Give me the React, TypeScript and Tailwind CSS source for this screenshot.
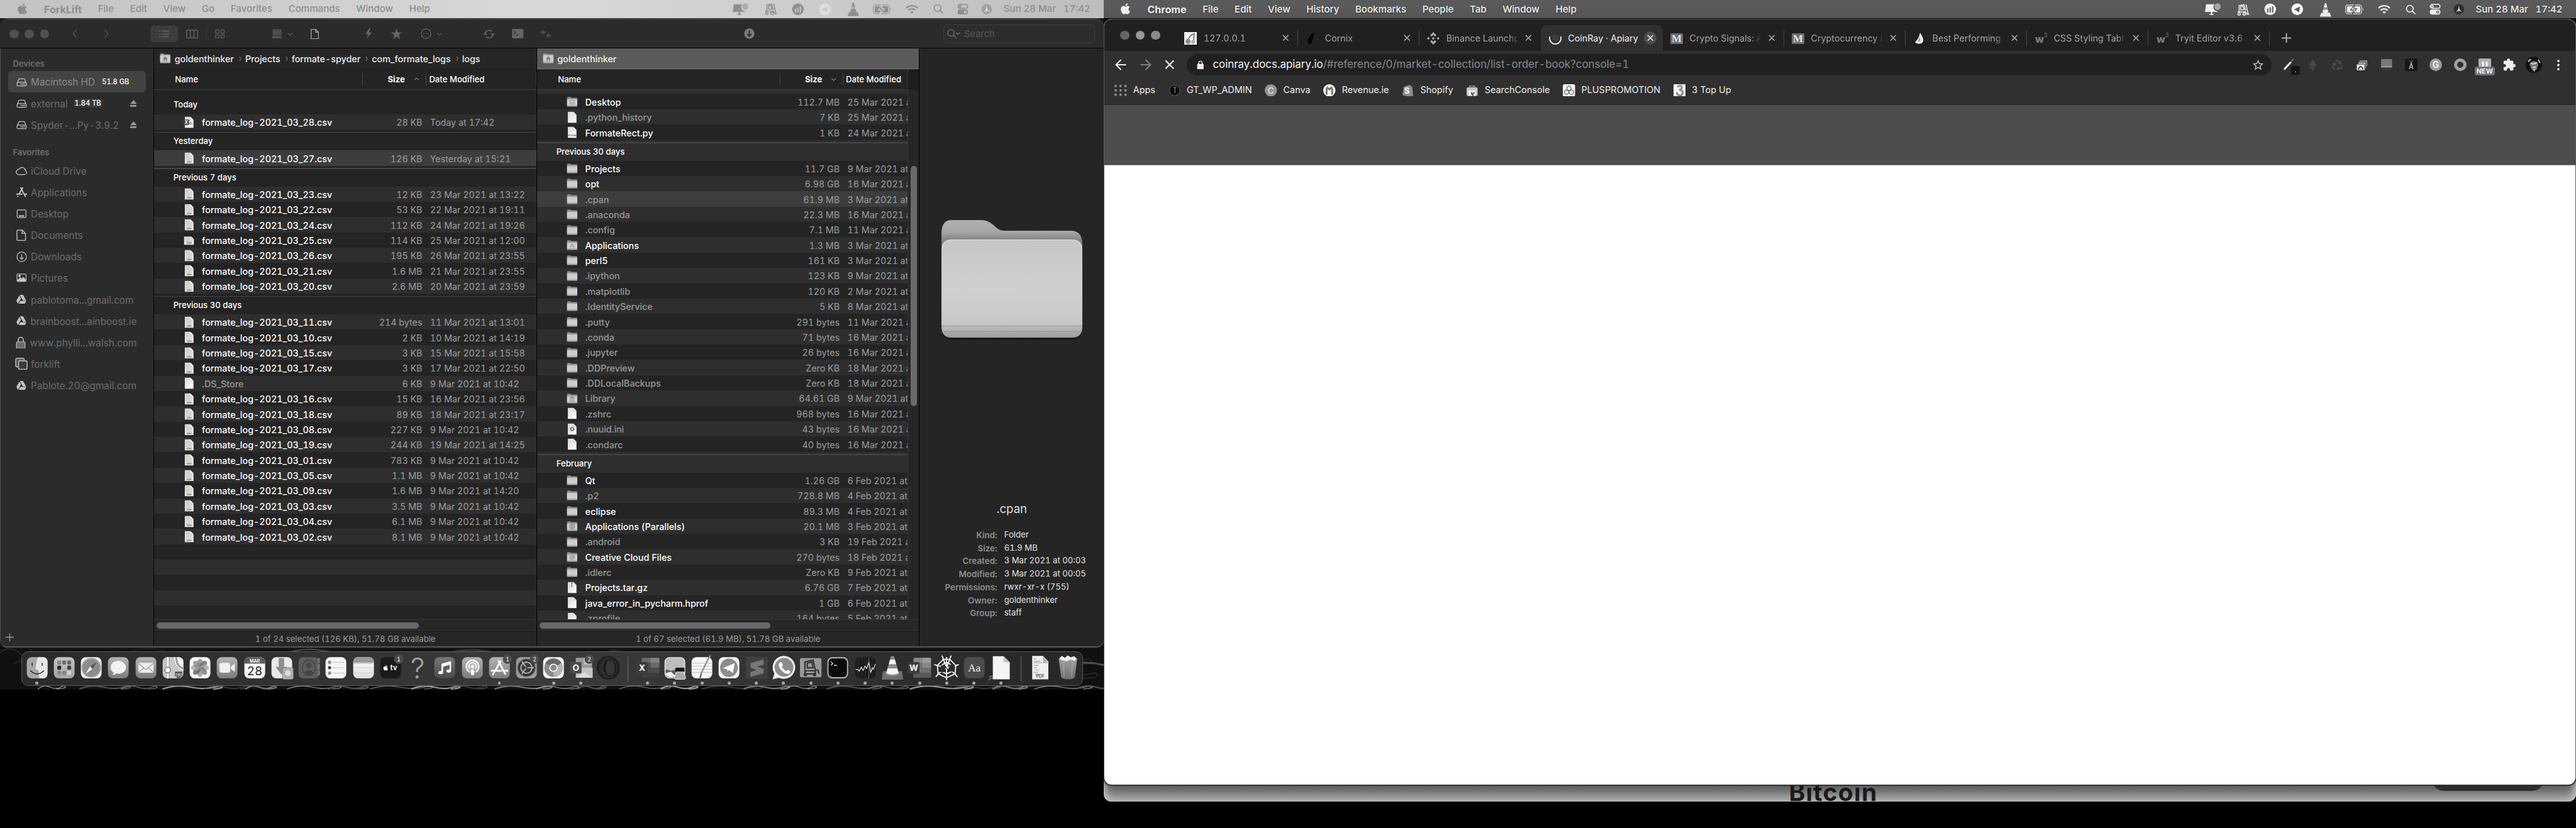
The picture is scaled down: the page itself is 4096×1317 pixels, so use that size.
import type { ReactNode } from "react";
import { FaApple, FaGoogleDrive, FaPodcast, FaMusic, FaWhatsapp, FaRecycle, FaEthereum } from "react-icons/fa";
import { MdExtension, MdStarOutline } from "react-icons/md";

type Kind = "csv" | "xls" | "csvwide" | "doc" | "py" | "ini" | "zip" | "folder" | "folderApp" | "folderLib" | "folderDesk" | "folderPar" | "folderCC";
type File = { n: string; s: string; d: string; k?: Kind; dim?: boolean; sel?: boolean };

/* ---------- shared gradients ---------- */
function Defs() {
  return (
    <svg className="absolute h-0 w-0" aria-hidden="true">
      <defs>
        <linearGradient id="folderFront" x1="0" y1="0" x2="0" y2="1">
          <stop offset="0" stopColor="#c6c6c6" />
          <stop offset="0.5" stopColor="#d0d0d0" />
          <stop offset="0.84" stopColor="#c8c8c8" />
          <stop offset="1" stopColor="#9c9c9c" />
        </linearGradient>
        <linearGradient id="folderBack" x1="0" y1="0" x2="0" y2="1">
          <stop offset="0" stopColor="#b0b0b0" />
          <stop offset="0.16" stopColor="#a6a6a6" />
          <stop offset="0.26" stopColor="#868686" />
          <stop offset="1" stopColor="#868686" />
        </linearGradient>
        <linearGradient id="paper" x1="0" y1="0" x2="1" y2="1">
          <stop offset="0" stopColor="#d8d8d8" />
          <stop offset="1" stopColor="#ffffff" />
        </linearGradient>
        <linearGradient id="mid" x1="0" y1="0" x2="0" y2="1">
          <stop offset="0" stopColor="#b4b4b4" />
          <stop offset="1" stopColor="#7c7c7c" />
        </linearGradient>
        <linearGradient id="light" x1="0" y1="0" x2="0" y2="1">
          <stop offset="0" stopColor="#c4c4c4" />
          <stop offset="1" stopColor="#a4a4a4" />
        </linearGradient>
        <linearGradient id="dark" x1="0" y1="0" x2="0" y2="1">
          <stop offset="0" stopColor="#787878" />
          <stop offset="1" stopColor="#4a4a4a" />
        </linearGradient>
        <linearGradient id="white" x1="0" y1="0" x2="0" y2="1">
          <stop offset="0" stopColor="#ffffff" />
          <stop offset="1" stopColor="#dcdcdc" />
        </linearGradient>
      </defs>
    </svg>
  );
}

/* ---------- small glyphs ---------- */
function Chevron({ dir, className }: { dir: "up" | "down" | "left" | "right"; className: string }) {
  const d = { up: "M1 7 5 2 9 7", down: "M1 3 5 8 9 3", left: "M7 0 3 5 7 10", right: "M3 0 7 5 3 10" }[dir];
  return (
    <svg viewBox="0 0 10 10" className={className} fill="none" stroke="currentColor" strokeWidth="1.3" preserveAspectRatio="none">
      <path d={d} />
    </svg>
  );
}

function Cross({ className }: { className: string }) {
  return (
    <svg viewBox="0 0 12 12" className={className} stroke="currentColor" strokeWidth="1.7" fill="none">
      <path d="M1 1 11 11M11 1 1 11" />
    </svg>
  );
}

function FolderIcon({ kind }: { kind: Kind }) {
  return (
    <svg viewBox="0 0 28 28" className="h-[17.5px] w-[17.5px] shrink-0">
      <path d="M1 4Q1 2 3 2H9Q10.500 2 11 4H25Q27 4 27 6V22H1Z" fill="#8e8e8e" />
      <rect x="1" y="7.500" width="26" height="19" rx="1.500" fill="url(#folderFront)" />
      <path d="M1 23.500H27" stroke="#888" strokeWidth="0.8" />
      {kind === "folderApp" && <path d="M9 20 14.500 10M19 20 13.500 10M8 17.500H20" stroke="#8c8c8c" strokeWidth="1.3" fill="none" />}
      {kind === "folderLib" && <path d="M8 12 14 9 20 12ZM9 13V20M12.500 13V20M15.500 13V20M19 13V20M8 21H20" stroke="#8c8c8c" strokeWidth="1.4" fill="#8c8c8c" />}
      {kind === "folderDesk" && <path d="M9 11H19V20H9ZM10 17H18" stroke="#8c8c8c" strokeWidth="1.300" fill="none" />}
      {kind === "folderPar" && <path d="M8 11H20V19H8ZM12 7V23M16 7V23" stroke="#777" strokeWidth="1.500" fill="none" />}
      {kind === "folderCC" && <g stroke="#888" strokeWidth="1.300" fill="none"><circle cx="14" cy="15" r="6" /><circle cx="12.500" cy="16" r="2.500" /><circle cx="16" cy="14.500" r="2.500" /></g>}
    </svg>
  );
}

function HomeFolder() {
  return (
    <svg viewBox="0 0 28 28" className="h-[17.500px] w-[17.5px] shrink-0">
      <path d="M1 4Q1 2 3 2H9Q10.500 2 11 4H25Q27 4 27 6V22H1Z" fill="#a4a4a4" />
      <rect x="1" y="6.500" width="26" height="20" rx="1.500" fill="url(#folderFront)" />
      <path d="M1 23.500H27" stroke="#888" strokeWidth="0.8" />
      <path d="M14 9 7.500 15H9.500V21H12.500V17H15.500V21H18.500V15H20.500Z" fill="#808080" />
    </svg>
  );
}

function DocIcon({ kind }: { kind: Kind }) {
  const wide = kind === "csvwide";
  return (
    <svg viewBox="0 0 28 30" className="h-[18.8px] w-[17.5px] shrink-0">
      <path d={wide ? "M1 5H19L26 12V26H1Z" : "M3 1H17L25 9V29H3Z"} fill="url(#paper)" />
      <path d={wide ? "M19 5V12H26Z" : "M17 1V9H25Z"} fill="#fff" stroke="#a8a8a8" strokeWidth="0.8" />
      {(kind === "csv" || kind === "csvwide") && (
        <>
          <path d={wide ? "M4 9H17M4 12H17M4 15H23M4 18H23" : "M6 5H15M6 8H15M6 11H22M6 14H22M6 17H22M6 20H22"} stroke="#b4b4b4" strokeWidth="1.200" />
          <text x="14" y={wide ? 24.5 : 27} fontSize="6" fontWeight="700" textAnchor="middle" fill="#444" fontFamily="Inter, sans-serif">CSV</text>
        </>
      )}
      {kind === "xls" && (
        <>
          <rect x="0" y="8" width="14" height="14" rx="1" fill="#484848" />
          <text x="7" y="19" fontSize="11" fontWeight="700" textAnchor="middle" fill="#fff" fontFamily="Inter, sans-serif">X</text>
          <text x="19" y="20" fontSize="11" fontWeight="600" textAnchor="middle" fill="#888" fontFamily="Inter, sans-serif">a,</text>
        </>
      )}
      {kind === "py" && <text x="14" y="26" fontSize="5" fontWeight="600" textAnchor="middle" fill="#555" fontFamily="Inter, sans-serif">PYTHON</text>}
      {kind === "ini" && <circle cx="14" cy="15" r="4" fill="none" stroke="#222" strokeWidth="3" strokeDasharray="1.800 1.200" />}
      {kind === "zip" && <path d="M13 1V14" stroke="#666" strokeWidth="3.500" strokeDasharray="1.500 0.500" />}
    </svg>
  );
}

function FileIcon({ kind = "csv" }: { kind?: Kind }) {
  return kind.startsWith("folder") ? <FolderIcon kind={kind} /> : <DocIcon kind={kind} />;
}

/* ---------- menu bars ---------- */
function StatusItems({ hollow }: { hollow: string }) {
  return (
    <div className="flex h-full items-center">
      <svg viewBox="0 0 28 22" className="h-[20px] w-[27.500px]">
        <path d="M2 2H17A7 7 0 0 0 21 14L23 15.500H0Z" fill="currentColor" />
        <path d="M10 16H13V19H15V20.500H8V19H10Z" fill="currentColor" />
        <ellipse cx="22" cy="6" rx="5.500" ry="5.800" fill="currentColor" opacity="0.5" />
      </svg>
      <svg viewBox="0 0 22 20" className="ml-[24px] h-[19px] w-[22px]" fill="none" stroke="currentColor" strokeWidth="1.600">
        <path d="M4 13V3L12 1.500 15 11M1.500 13.500H15L17 17.500H21M15.500 1 19 17M6.500 4.500 10.500 4 12.500 10H6.500Z" />
        <circle cx="4" cy="17" r="2" /><circle cx="12.500" cy="17" r="2" />
      </svg>
      <svg viewBox="0 0 20 20" className="ml-[21.500px] h-[19.500px] w-[19.500px]">
        <circle cx="10" cy="10" r="9.500" fill="currentColor" />
        <path d="M6 9V15M10 7V15M14 5V15" stroke={hollow} strokeWidth="2" />
      </svg>
      <svg viewBox="0 0 20 20" className="ml-[24px] h-[19.500px] w-[19.500px]">
        <circle cx="10" cy="10" r="9.500" fill={hollow === "#5a5a5a" ? "#ffffff" : "#dedede"} />
        <path d="M4.500 10.500 14.500 5.500 13 15.500 9.500 12.500Z" fill={hollow} />
      </svg>
      <svg viewBox="0 0 20 24" className="ml-[25.500px] h-[23px] w-[19.500px]">
        <path d="M9 1H11L13 8H7ZM6 12H14L15 16Q10 18 5 16ZM3 17H17L19.500 23.500H.5Z" fill="currentColor" />
        <path d="M7 8H13L14 12H6Z" fill="currentColor" opacity="0.4" />
      </svg>
      <svg viewBox="0 0 30 16" className="ml-[21px] h-[16px] w-[30px]">
        <rect x="0.700" y="1" width="25.500" height="14" rx="3.500" fill="none" stroke="currentColor" strokeWidth="1.300" opacity="0.8" />
        <rect x="2.800" y="3" width="21.300" height="10" rx="1.800" fill="currentColor" />
        <path d="M15 0.500 8.500 9H13L11.500 15.500 18.500 7H14Z" fill="currentColor" stroke={hollow} strokeWidth="1.300" />
        <path d="M28 5.500V10.500Q29.500 8 28 5.500Z" fill="currentColor" />
      </svg>
      <svg viewBox="0 0 20 16" className="ml-[22.500px] h-[16px] w-[20px]" fill="none" stroke="currentColor" strokeWidth="2.400">
        <path d="M1 6A12.500 12.500 0 0 1 19 6M4.300 9.500A8 8 0 0 1 15.700 9.500" />
        <path d="M10 15 7.200 12Q10 10 12.800 12Z" fill="currentColor" stroke="none" />
      </svg>
      <svg viewBox="0 0 17 17" className="ml-[23.500px] h-[16.500px] w-[16.500px]" fill="none" stroke="currentColor" strokeWidth="1.700">
        <circle cx="7" cy="7" r="5.500" /><path d="M11 11 16 16" />
      </svg>
      <svg viewBox="0 0 18 18" className="ml-[21.500px] h-[17.500px] w-[18px]" fill="none" stroke="currentColor" strokeWidth="1.400">
        <rect x="1" y="1" width="16" height="6.500" rx="3.200" /><circle cx="4.300" cy="4.300" r="1.600" />
        <rect x="1" y="10" width="16" height="7" rx="3.500" fill="currentColor" /><circle cx="13.300" cy="13.500" r="1.800" stroke={hollow} />
      </svg>
      <svg viewBox="0 0 18 18" className="ml-[20px] h-[17.500px] w-[17.500px]">
        <circle cx="9" cy="9" r="8.500" fill={hollow === "#5a5a5a" ? "#2e2e2e" : "#a0a0a0"} />
        <path d="M9 3 10 9 14 14 9.500 11 9 15.500 8.500 11 4 14 8 9Z" fill="#efefef" />
      </svg>
      <span className="ml-[18.500px] w-[95px] text-[15px] font-medium">Sun 28 Mar</span>
      <span className="w-[42px] text-[15px] font-medium">17:42</span>
    </div>
  );
}

function MenuBar({ app, items, className, hollow }: { app: string; items: string[]; className: string; hollow: string }) {
  return (
    <div className={className}>
      <div className="flex items-center whitespace-nowrap">
        <FaApple className="mb-[2px] h-[20px] w-[17px]" />
        <span className="ml-[26.500px] mr-[25.500px] text-[16.1px] font-bold">{app}</span>
        <div className="flex gap-[25.600px] text-[15.1px] font-medium">
          {items.map((m) => <span key={m}>{m}</span>)}
        </div>
      </div>
      <StatusItems hollow={hollow} />
    </div>
  );
}

/* ---------- ForkLift window ---------- */
function ForkToolbar() {
  return (
    <div className="flex h-[46px] shrink-0 items-center border-b-[1.2px] border-black bg-[#2b2b2b] pl-[15px] text-[#646464]">
      <div className="flex gap-[9.700px]">
        {[0, 1, 2].map((i) => <span key={i} className="h-[14.600px] w-[14.600px] rounded-full bg-[#505050]" />)}
      </div>
      <Chevron dir="left" className="ml-[35px] h-[13px] w-[12px] text-[#505050]" />
      <Chevron dir="right" className="ml-[38px] h-[13px] w-[12px] text-[#505050]" />
      <div className="ml-[64px] flex h-[26.800px] w-[43.600px] items-center justify-center rounded-[5px] bg-[#3c3c3c]">
        <svg viewBox="0 0 16 12" className="h-[12px] w-[16px]" stroke="currentColor" strokeWidth="1.400"><path d="M0 1.500H2M4.500 1.500H16M0 6H2M4.500 6H16M0 10.500H2M4.500 10.500H16" /></svg>
      </div>
      <svg viewBox="0 0 19 14" className="ml-[13.500px] h-[14.500px] w-[19px]" stroke="currentColor" strokeWidth="1.400" fill="none"><rect x="0.700" y="0.700" width="17.600" height="12.600" rx="2" /><path d="M6.500 1V13M12.500 1V13" /></svg>
      <span className="ml-[13px] h-[16px] w-px bg-[#3a3a3a]" />
      <svg viewBox="0 0 16 15" className="ml-[13px] h-[14.500px] w-[15.500px]" stroke="currentColor" strokeWidth="1.300" fill="none">
        <rect x="0.700" y="0.700" width="5.500" height="5.500" rx="1" /><rect x="9.500" y="0.700" width="5.500" height="5.500" rx="1" /><rect x="0.700" y="8.700" width="5.500" height="5.500" rx="1" /><rect x="9.500" y="8.700" width="5.500" height="5.500" rx="1" />
      </svg>
      <svg viewBox="0 0 15 15" className="ml-[75px] h-[14.500px] w-[15px]" fill="none" stroke="currentColor" strokeWidth="1.300">
        <path d="M0 .7H15M0 8.200H15" /><path d="M1 3H4V6H1ZM6 3H9V6H6ZM11 3H14V6H11ZM1 11H4V14H1ZM6 11H9V14H6ZM11 11H14V14H11Z" />
      </svg>
      <Chevron dir="down" className="ml-[9px] h-[6px] w-[9px]" />
      <svg viewBox="0 0 13 16" className="ml-[28.500px] h-[16.500px] w-[13px] text-[#a8a8a8]" fill="none" stroke="currentColor" strokeWidth="1.300"><path d="M.7 .7H8L12.300 5V15.300H.7ZM8 .7V5H12.300" /></svg>
      <svg viewBox="0 0 12 18" className="ml-[73px] h-[17px] w-[12px]" fill="currentColor"><path d="M7 0 1 10H5.500L2.500 18 11.500 7H6.500L9.500 0Z" /></svg>
      <svg viewBox="0 0 20 19" className="ml-[28.500px] h-[18px] w-[19px]" fill="currentColor"><path d="M10 0 12.400 7H19.500L13.800 11.200 16 18.500 10 14 4 18.500 6.200 11.200 .5 7H7.600Z" /></svg>
      <svg viewBox="0 0 18 18" className="ml-[29px] h-[17px] w-[17px]" fill="none" stroke="currentColor" strokeWidth="1.300"><circle cx="9" cy="9" r="8" /><path d="M4.500 9H6M8.300 9H9.800M12 9H13.500" strokeWidth="1.800" /></svg>
      <Chevron dir="down" className="ml-[8.500px] h-[6px] w-[9px]" />
      <svg viewBox="0 0 20 18" className="ml-[65px] h-[16.500px] w-[19px]" fill="none" stroke="currentColor" strokeWidth="1.800">
        <path d="M3.500 10A6.700 6.700 0 0 1 15 4.500M16.500 8A6.700 6.700 0 0 1 5 13.500" /><path d="M0 10H7L3.500 5.500ZM13 8H20L16.500 12.500Z" fill="currentColor" stroke="none" />
      </svg>
      <svg viewBox="0 0 18 15" className="ml-[27px] h-[15px] w-[18.500px]"><rect width="18" height="15" rx="2.500" fill="currentColor" /><path d="M3 3 5.500 5.500 3 8M6.500 9.500H10" stroke="#2b2b2b" strokeWidth="1.300" fill="none" /></svg>
      <svg viewBox="0 0 18 15" className="ml-[26.500px] h-[14px] w-[17.500px]" fill="#4c4c4c"><path d="M0 3H4V0L10 5 4 9V6H0ZM18 9H14V6L9 10.500 14 15V12H18Z" /></svg>
      <svg viewBox="0 0 18 18" className="ml-[306.500px] h-[17px] w-[17px]"><circle cx="9" cy="9" r="8.700" fill="#7a7a7a" /><path d="M9 4V13M5.500 9.500 9 13.300 12.500 9.500" stroke="#2b2b2b" strokeWidth="2" fill="none" /></svg>
      <div className="ml-[299.500px] flex h-[30px] w-[240.800px] items-center rounded-[6px] border border-[#3e3e3e] bg-[#2d2d2d] pl-[5px]">
        <svg viewBox="0 0 22 16" className="h-[15.500px] w-[21px] text-[#707070]" fill="none" stroke="currentColor" strokeWidth="1.400"><circle cx="6.500" cy="6.500" r="5.500" /><path d="M10.500 10.500 15 15M15 6 18 9 21 6" /></svg>
        <span className="ml-[6px] pt-px text-[14.800px] text-[#575757]">Search</span>
      </div>
    </div>
  );
}

const ic = "h-[17px] w-[17px]";
const driveIcon = (
  <svg viewBox="0 0 18 18" className={ic} fill="none" stroke="currentColor" strokeWidth="1.300"><path d="M1.500 11 4 4.500Q4.300 3.500 5.500 3.500H12.500Q13.700 3.500 14 4.500L16.500 11" /><rect x="1.200" y="9.500" width="15.600" height="6" rx="1.800" /><path d="M7 12.500H15" strokeWidth="2.200" strokeDasharray="1.200 .6" /></svg>
);
const cloudIcon = (
  <svg viewBox="0 0 20 16" className="h-[15px] w-[20px]" fill="none" stroke="currentColor" strokeWidth="1.400"><path d="M5 14.500H15.500A3.500 3.500 0 0 0 17 8 6 6 0 0 0 6 5.500 4.500 4.500 0 0 0 2.500 7.500 4 4 0 0 0 5 14.500Z" /></svg>
);
const appsIcon = (
  <svg viewBox="0 0 20 18" className="h-[17px] w-[19px]" fill="none" stroke="currentColor" strokeWidth="2"><path d="M8 1 16.500 17M12 1 5.500 12.500M4 15.200 3 17M1 12.500H11M14.500 12.500H19" /></svg>
);
const desktopIcon = (
  <svg viewBox="0 0 18 16" className="h-[14px] w-[16.500px]" fill="none" stroke="currentColor" strokeWidth="1.400"><rect x="1" y="1" width="16" height="14" rx="2" /><path d="M4 12H14" strokeWidth="2.500" /></svg>
);
const docIcon = (
  <svg viewBox="0 0 16 19" className="h-[18.500px] w-[15.500px]" fill="none" stroke="currentColor" strokeWidth="1.400"><path d="M3 1H9.500L15 6.500V16.500Q15 18 13.500 18H2.500Q1 18 1 16.500V2.500Q1 1 3 1ZM9.500 1V6.500H15" /></svg>
);
const downIcon = (
  <svg viewBox="0 0 18 18" className={ic} fill="none" stroke="currentColor" strokeWidth="1.300"><circle cx="9" cy="9" r="8" /><path d="M9 4.500V13M6 10 9 13 12 10" /></svg>
);
const picIcon = (
  <svg viewBox="0 0 18 15" className="h-[13.500px] w-[16.500px]" fill="none" stroke="currentColor" strokeWidth="1.400"><rect x="1" y="1" width="16" height="13" rx="2" /><path d="M2 12 7 7.500 9.500 10 12 7 16 11V13.500H2Z" fill="currentColor" /><circle cx="5.500" cy="4.500" r="1.500" fill="currentColor" /></svg>
);
const gdrive = <FaGoogleDrive className="h-[16px] w-[18px]" />;
const lockIcon = (
  <svg viewBox="0 0 16 20" className="h-[19.500px] w-[16px]"><path d="M4 9V5.500A4 4 0 0 1 12 5.500V9" fill="none" stroke="currentColor" strokeWidth="1.600" /><rect x="1" y="9" width="14" height="10.500" rx="1.500" fill="#6c6c6c" stroke="currentColor" strokeWidth="1.200" /></svg>
);
const copyIcon = (
  <svg viewBox="0 0 20 19" className="h-[19px] w-[20px]" fill="#3a3a3a" stroke="currentColor" strokeWidth="1.400"><rect x="1" y="1" width="13.500" height="13.500" rx="2" fill="#555" /><rect x="5.500" y="5" width="13.500" height="13.500" rx="2" /></svg>
);

function Side({ icon, label, badge, eject, selected }: { icon: ReactNode; label: string; badge?: string; eject?: boolean; selected?: boolean }) {
  return (
    <div className={selected
      ? "mx-[12.300px] flex h-[34.130px] items-center rounded-[6px] bg-[#434343] pl-[9px] pr-[12px] text-[#8c8c8c]"
      : "mx-[12.300px] flex h-[34.130px] items-center pl-[9px] pr-[14.500px] text-[#6c6c6c]"}>
      <span className="flex w-[23.500px] justify-center text-[#c4c4c4]">{icon}</span>
      <span className="ml-[3.300px] whitespace-nowrap pt-[1.500px] text-[15.350px]">{label}</span>
      {badge && <span className={selected ? "ml-[11.300px] text-[11.100px] font-medium text-white" : "ml-[9px] rounded-[3px] bg-[#3a3a3a] px-[2px] text-[11.100px] font-medium leading-[14px] text-white"}>{badge}</span>}
      {eject && <svg viewBox="0 0 11 11" className="ml-auto h-[10.700px] w-[10.700px]" fill="#9c9c9c"><path d="M5.500 0 11 6.500H0ZM0 8.200H11V11H0Z" /></svg>}
    </div>
  );
}

function Sidebar() {
  return (
    <div className="flex w-[244.200px] shrink-0 flex-col border-l border-[#555] bg-[#2b2b2b]">
      <div className="flex h-[35.600px] items-center pl-[19.500px] pt-[12.500px] text-[13px] font-semibold text-[#6e6e6e]">Devices</div>
      <Side icon={driveIcon} label="Macintosh HD" badge="51.8 GB" selected />
      <Side icon={driveIcon} label="external" badge="1.84 TB" eject />
      <Side icon={driveIcon} label="Spyder-...Py-3.9.2" eject />
      <div className="flex h-[39.100px] items-center pl-[19.500px] pt-[14.500px] text-[13px] font-semibold text-[#6e6e6e]">Favorites</div>
      <Side icon={cloudIcon} label="iCloud Drive" />
      <Side icon={appsIcon} label="Applications" />
      <Side icon={desktopIcon} label="Desktop" />
      <Side icon={docIcon} label="Documents" />
      <Side icon={downIcon} label="Downloads" />
      <Side icon={picIcon} label="Pictures" />
      <Side icon={gdrive} label="pablotoma...gmail.com" />
      <Side icon={gdrive} label="brainboost...ainboost.ie" />
      <Side icon={lockIcon} label="www.phylli...walsh.com" />
      <Side icon={copyIcon} label="forklift" />
      <Side icon={gdrive} label="Pablote.20@gmail.com" />
      <svg viewBox="0 0 13 13" className="mb-[8px] ml-[7.500px] mt-auto h-[13px] w-[13px]" stroke="#9a9a9a" strokeWidth="1.300"><path d="M6.500 0V13M0 6.500H13" /></svg>
    </div>
  );
}

const stripes = ["bg-[#2e2e2e]", "bg-[#242424]"];

function Row({ f, stripe, second }: { f: File; stripe: number; second?: boolean }) {
  return (
    <div className={`flex h-[24.383px] shrink-0 items-center whitespace-nowrap pl-[47px] text-[14.300px] leading-[20px] text-[#9c9c9c] ${f.sel ? "bg-[#3d3d3d]" : stripes[stripe % 2]}`}>
      <FileIcon kind={f.k} />
      <div className={second ? "ml-[11.800px] flex w-[404.600px] shrink-0 justify-between pt-[2px]" : "ml-[11.400px] flex w-[350.400px] shrink-0 justify-between pt-[2px]"}>
        <span className={f.dim ? "font-medium text-[#989898]" : "font-medium tracking-[0.040px] text-white"}>{f.n}</span>
        <span>{f.s}</span>
      </div>
      <span className="ml-[12.300px] pt-[2px]">{f.d}</span>
    </div>
  );
}

function Group({ title, first, light }: { title: string; first?: boolean; light?: boolean }) {
  return (
    <div className={`flex shrink-0 flex-col pt-[3.700px] ${first ? "h-[39px]" : "h-[32.900px]"} ${light ? "bg-[#2e2e2e]" : "bg-[#242424]"}`}>
      {!first && <div className="h-[1.300px] shrink-0 bg-[#444]" />}
      <div className={first ? "flex grow items-end pb-[5px] pl-[30.500px] text-[13.150px] font-medium text-white" : "flex grow items-center pb-[0.500px] pl-[30.500px] text-[13.150px] font-medium text-white"}>{title}</div>
    </div>
  );
}

const left7: File[] = [
  { n: "formate_log-2021_03_23.csv", s: "12 KB", d: "23 Mar 2021 at 13:22" },
  { n: "formate_log-2021_03_22.csv", s: "53 KB", d: "22 Mar 2021 at 19:11" },
  { n: "formate_log-2021_03_24.csv", s: "112 KB", d: "24 Mar 2021 at 19:26" },
  { n: "formate_log-2021_03_25.csv", s: "114 KB", d: "25 Mar 2021 at 12:00", k: "csvwide" },
  { n: "formate_log-2021_03_26.csv", s: "195 KB", d: "26 Mar 2021 at 23:55" },
  { n: "formate_log-2021_03_21.csv", s: "1.6 MB", d: "21 Mar 2021 at 23:55" },
  { n: "formate_log-2021_03_20.csv", s: "2.6 MB", d: "20 Mar 2021 at 23:59" },
];
const left30: File[] = [
  { n: "formate_log-2021_03_11.csv", s: "214 bytes", d: "11 Mar 2021 at 13:01" },
  { n: "formate_log-2021_03_10.csv", s: "2 KB", d: "10 Mar 2021 at 14:19" },
  { n: "formate_log-2021_03_15.csv", s: "3 KB", d: "15 Mar 2021 at 15:58" },
  { n: "formate_log-2021_03_17.csv", s: "3 KB", d: "17 Mar 2021 at 22:50" },
  { n: ".DS_Store", s: "6 KB", d: "9 Mar 2021 at 10:42", k: "doc", dim: true },
  { n: "formate_log-2021_03_16.csv", s: "15 KB", d: "16 Mar 2021 at 23:56" },
  { n: "formate_log-2021_03_18.csv", s: "89 KB", d: "18 Mar 2021 at 23:17" },
  { n: "formate_log-2021_03_08.csv", s: "227 KB", d: "9 Mar 2021 at 10:42" },
  { n: "formate_log-2021_03_19.csv", s: "244 KB", d: "19 Mar 2021 at 14:25" },
  { n: "formate_log-2021_03_01.csv", s: "783 KB", d: "9 Mar 2021 at 10:42" },
  { n: "formate_log-2021_03_05.csv", s: "1.1 MB", d: "9 Mar 2021 at 10:42" },
  { n: "formate_log-2021_03_09.csv", s: "1.6 MB", d: "9 Mar 2021 at 14:20" },
  { n: "formate_log-2021_03_03.csv", s: "3.5 MB", d: "9 Mar 2021 at 10:42" },
  { n: "formate_log-2021_03_04.csv", s: "6.1 MB", d: "9 Mar 2021 at 10:42" },
  { n: "formate_log-2021_03_02.csv", s: "8.1 MB", d: "9 Mar 2021 at 10:42" },
];
const right0: File[] = [
  { n: "Desktop", s: "112.7 MB", d: "25 Mar 2021 a", k: "folderDesk" },
  { n: ".python_history", s: "7 KB", d: "25 Mar 2021 a", k: "doc", dim: true },
  { n: "FormateRect.py", s: "1 KB", d: "24 Mar 2021 a", k: "py" },
];
const right30: File[] = [
  { n: "Projects", s: "11.7 GB", d: "9 Mar 2021 at", k: "folder" },
  { n: "opt", s: "6.98 GB", d: "16 Mar 2021 a", k: "folder" },
  { n: ".cpan", s: "61.9 MB", d: "3 Mar 2021 at", k: "folder", dim: true, sel: true },
  { n: ".anaconda", s: "22.3 MB", d: "16 Mar 2021 a", k: "folder", dim: true },
  { n: ".config", s: "7.1 MB", d: "11 Mar 2021 a", k: "folder", dim: true },
  { n: "Applications", s: "1.3 MB", d: "3 Mar 2021 at", k: "folderApp" },
  { n: "perl5", s: "161 KB", d: "3 Mar 2021 at", k: "folder" },
  { n: ".ipython", s: "123 KB", d: "9 Mar 2021 at", k: "folder", dim: true },
  { n: ".matplotlib", s: "120 KB", d: "2 Mar 2021 at", k: "folder", dim: true },
  { n: ".IdentityService", s: "5 KB", d: "8 Mar 2021 at", k: "folder", dim: true },
  { n: ".putty", s: "291 bytes", d: "11 Mar 2021 a", k: "folder", dim: true },
  { n: ".conda", s: "71 bytes", d: "16 Mar 2021 a", k: "folder", dim: true },
  { n: ".jupyter", s: "26 bytes", d: "16 Mar 2021 a", k: "folder", dim: true },
  { n: ".DDPreview", s: "Zero KB", d: "18 Mar 2021 a", k: "folder", dim: true },
  { n: ".DDLocalBackups", s: "Zero KB", d: "18 Mar 2021 a", k: "folder", dim: true },
  { n: "Library", s: "64.61 GB", d: "9 Mar 2021 at", k: "folderLib", dim: true },
  { n: ".zshrc", s: "968 bytes", d: "16 Mar 2021 a", k: "doc", dim: true },
  { n: ".nuuid.ini", s: "43 bytes", d: "16 Mar 2021 a", k: "ini", dim: true },
  { n: ".condarc", s: "40 bytes", d: "16 Mar 2021 a", k: "doc", dim: true },
];
const rightFeb: File[] = [
  { n: "Qt", s: "1.26 GB", d: "6 Feb 2021 at", k: "folder" },
  { n: ".p2", s: "728.8 MB", d: "4 Feb 2021 at", k: "folder", dim: true },
  { n: "eclipse", s: "89.3 MB", d: "4 Feb 2021 at", k: "folder" },
  { n: "Applications (Parallels)", s: "20.1 MB", d: "3 Feb 2021 at", k: "folderPar" },
  { n: ".android", s: "3 KB", d: "19 Feb 2021 a", k: "folder", dim: true },
  { n: "Creative Cloud Files", s: "270 bytes", d: "18 Feb 2021 a", k: "folderCC" },
  { n: ".idlerc", s: "Zero KB", d: "9 Feb 2021 at", k: "folder", dim: true },
  { n: "Projects.tar.gz", s: "6.76 GB", d: "7 Feb 2021 at", k: "zip" },
  { n: "java_error_in_pycharm.hprof", s: "1 GB", d: "6 Feb 2021 at", k: "doc" },
  { n: ".zprofile", s: "164 bytes", d: "5 Feb 2021 at", k: "doc", dim: true },
];

function Header({ second }: { second?: boolean }) {
  return (
    <div className="flex h-[33.400px] shrink-0 items-center border-b-[1.400px] border-[#3e3e3e] bg-[#242424] text-[13.150px] font-medium text-white">
      <span className={second ? "w-[385.600px] shrink-0 pl-[33px] pt-px" : "w-[331px] shrink-0 pl-[33px] pt-px"}>Name</span>
      <span className="h-[19.500px] w-px shrink-0 bg-[#444]" />
      <span className={second ? "ml-[39.200px] w-[41px] shrink-0 pt-px font-bold" : "ml-[39.300px] w-[41.500px] shrink-0 pt-px font-bold"}>Size</span>
      <Chevron dir={second ? "down" : "up"} className="h-[6px] w-[9px] shrink-0 text-[#8c8c8c]" />
      <span className={second ? "ml-[10px] h-[19.500px] w-px shrink-0 bg-[#444]" : "ml-[10.400px] h-[19.500px] w-px shrink-0 bg-[#444]"} />
      <span className="ml-[4px] grow whitespace-nowrap pt-px">Date Modified</span>
      {!second && <span className="h-[19.500px] w-px shrink-0 bg-[#444]" />}
    </div>
  );
}

function PaneFooter({ thumb, status }: { thumb: string; status: string }) {
  return (
    <>
      <div className="h-[18px] shrink-0 border-y border-[#363636] bg-[#272727] px-[3.500px] py-[4px]"><div className={thumb} /></div>
      <div className="flex h-[25px] shrink-0 items-center justify-center border-t border-[#191919] bg-[#262626] pt-px text-[13.150px] text-[#9a9a9a]">{status}</div>
    </>
  );
}

function LeftPane() {
  const path = ["goldenthinker", "Projects", "formate-spyder", "com_formate_logs", "logs"];
  return (
    <div className="flex w-[609px] shrink-0 flex-col border-l-[1.200px] border-black bg-[#242424]">
      <div className="flex h-[32.200px] shrink-0 items-center border-b border-[#222] bg-[#262626] pl-[8.500px] text-[14.3px] font-medium text-[#ebebeb]">
        <HomeFolder />
        {path.map((p, i) => (
          <span key={p} className="flex items-center">
            {i > 0 && <Chevron dir="right" className="ml-[7px] mr-[5px] h-[7px] w-[6px] text-[#a0a0a0]" />}
            <span className={i === 0 ? "ml-[6.500px] pt-px" : "pt-px"}>{p}</span>
          </span>
        ))}
      </div>
      <Header />
      <div className="flex min-h-0 grow flex-col overflow-hidden">
        <Group title="Today" first />
        <Row f={{ n: "formate_log-2021_03_28.csv", s: "28 KB", d: "Today at 17:42", k: "xls" }} stripe={0} />
        <Group title="Yesterday" />
        <Row f={{ n: "formate_log-2021_03_27.csv", s: "126 KB", d: "Yesterday at 15:21", sel: true }} stripe={0} />
        <Group title="Previous 7 days" />
        {left7.map((f, i) => <Row key={f.n} f={f} stripe={i} />)}
        <Group title="Previous 30 days" />
        {left30.map((f, i) => <Row key={f.n} f={f} stripe={i} />)}
        {[1, 2, 3, 4, 5].map((i) => <div key={i} className={`h-[24.383px] shrink-0 ${stripes[i % 2]}`} />)}
      </div>
      <PaneFooter thumb="h-[9.500px] w-[417px] rounded-full bg-[#686868]" status="1 of 24 selected (126 KB), 51.78 GB available" />
    </div>
  );
}

function RightPane() {
  return (
    <div className="flex w-[608px] shrink-0 flex-col border-l-[1.200px] border-black bg-[#242424]">
      <div className="flex h-[32.200px] shrink-0 items-center border-b border-[#7c7c7c] bg-[#5a5a5a] pl-[8.500px] text-[14.3px] font-medium text-[#f0f0f0]">
        <HomeFolder />
        <span className="ml-[6px] pt-px">goldenthinker</span>
      </div>
      <div className="flex min-h-0 grow">
        <div className="flex w-[589px] flex-col overflow-hidden">
          <Header second />
          <div className="flex min-h-0 grow flex-col overflow-hidden">
            <div className="h-[6.500px] shrink-0 bg-[#2e2e2e]" />
            {right0.map((f, i) => <Row key={f.n} f={f} stripe={i + 1} second />)}
            <Group title="Previous 30 days" light />
            {right30.map((f, i) => <Row key={f.n} f={f} stripe={i + 1} second />)}
            <Group title="February" light />
            {rightFeb.map((f, i) => <Row key={f.n} f={f} stripe={i + 1} second />)}
          </div>
        </div>
        <div className="flex grow flex-col items-center border-l border-[#333] bg-[#272727]">
          <div className="h-[33.400px] w-full bg-[#1d1d1d]" />
          <div className="mt-[121px] h-[381.600px] w-[10px] rounded-full bg-[#6a6a6a]" />
        </div>
      </div>
      <PaneFooter thumb="h-[9.500px] w-[367px] rounded-full bg-[#686868]" status="1 of 67 selected (61.9 MB), 51.78 GB available" />
    </div>
  );
}

function InfoPanel() {
  const rows = [["Kind:", "Folder"], ["Size:", "61.9 MB"], ["Created:", "3 Mar 2021 at 00:03"], ["Modified:", "3 Mar 2021 at 00:05"], ["Permissions:", "rwxr-xr-x (755)"], ["Owner:", "goldenthinker"], ["Group:", "staff"]];
  return (
    <div className="flex grow flex-col border-l-[1.200px] border-black bg-[#252525] pt-[272px]">
      <svg viewBox="0 0 224 196" className="ml-[34.500px] h-[196px] w-[224px] overflow-visible">
        <rect x="2" y="170" width="220" height="22" rx="14" fill="#151515" opacity="0.6" />
        <path d="M0 22Q0 1 16 1H62C84 1 84 18 100 18H206Q224 18 224 40V120H0Z" fill="url(#folderBack)" />
        <path d="M0 50Q0 32 16 32H208Q224 32 224 50V170Q224 188 208 188H16Q0 188 0 170Z" fill="url(#folderFront)" />
        <path d="M1 48Q1 32.500 16 32.500H208Q223 32.500 223 48" fill="none" stroke="#e4e4e4" strokeWidth="1" />
        <path d="M0 169.500H224M0 178.500H224" stroke="#8e8e8e" strokeWidth="1.200" opacity="0.7" />
      </svg>
      <div className="mt-[253.500px] text-center text-[18.600px] leading-[20px] text-[#dcdcdc]">.cpan</div>
      <div className="mt-[21.500px] flex flex-col">
        {rows.map(([a, b]) => (
          <div key={a} className="flex h-[20.750px] items-center whitespace-nowrap">
            <span className="w-[123.500px] text-right text-[13.450px] font-semibold text-[#8e8e8e]">{a}</span>
            <span className="ml-[11px] text-[13.150px] text-[#e2e2e2]">{b}</span>
          </div>
        ))}
      </div>
    </div>
  );
}

/* ---------- Dock ---------- */
const font = "Inter, sans-serif";
function Tile({ fill }: { fill: string }) {
  return <rect x="1" y="0.500" width="54" height="55" rx="12.500" fill={fill} />;
}
function Badge({ n }: { n: string }) {
  return <g><circle cx="49" cy="6" r="12" fill="#4c4c4c" /><text x="49" y="11" fontSize="14" textAnchor="middle" fill="#fff" fontFamily={font}>{n}</text></g>;
}
function OfficeIcon({ letter, tone }: { letter: string; tone: string }) {
  return (
    <>
      <rect x="12" y="2" width="46" height="52" rx="3" fill={tone} />
      <path d="M12 2H35V15H12ZM35 15H58V28H35Z" fill="#fff" opacity="0.16" /><path d="M35 2H58V15H35Z" fill="#fff" opacity="0.3" />
      <path d="M12 41H58V51Q58 54 55 54H15Q12 54 12 51Z" fill="#000" opacity="0.2" />
      <rect x="-2" y="13" width="30" height="30" rx="3" fill="#3c3c3c" />
      <text x="13" y="36" fontSize="22" fontWeight="700" textAnchor="middle" fill="#fff" fontFamily={font}>{letter}</text>
    </>
  );
}

type Dock = { art: ReactNode; dot?: boolean } | "sep";
const spokes = [0, 45, 90, 135, 180, 225, 270, 315];
const dock: Dock[] = [
  { dot: true, art: <><Tile fill="#a8a8a8" /><path d="M30 .5H43Q55 .5 55 13V43Q55 55.500 43 55.500H34Q31 44 31 33H24Q25 14 30 .5Z" fill="#e8e8e8" /><path d="M15 16V22M41 16V22M11 36Q28 52 45 36" stroke="#222" strokeWidth="2.500" fill="none" strokeLinecap="round" /></> },
  { art: <><Tile fill="url(#light)" />{[0, 1, 2].map((r) => [0, 1, 2].map((c) => <rect key={`${r}${c}`} x={10 + c * 13} y={9 + r * 13.5} width="10" height="10.500" rx="2.500" fill={["#848484", "#6c6c6c", "#666", "#262626", "#b8b8b8", "#404040", "#888", "#848484", "#d0d0d0"][r * 3 + c]} />))}</> },
  { art: <><Tile fill="#ececec" /><circle cx="28" cy="28" r="25" fill="#8c8c8c" /><circle cx="28" cy="28" r="22.500" fill="none" stroke="#bbb" strokeWidth="3" strokeDasharray="1 2.500" /><path d="M43 12 31 31 25 25Z" fill="#555" /><path d="M13 44 25 25 31 31Z" fill="#fff" /></> },
  { art: <><Tile fill="url(#mid)" /><ellipse cx="28" cy="27" rx="20" ry="17" fill="#f2f2f2" /><path d="M16 37Q17 43 12 47Q21 46 24 41Z" fill="#f2f2f2" /></> },
  { art: <><Tile fill="url(#mid)" /><rect x="8" y="15" width="40" height="26" rx="3" fill="#ececec" /><path d="M9 17 28 33 47 17M9 40 22 28M47 40 34 28" stroke="#8c8c8c" strokeWidth="1.800" fill="none" /></> },
  { art: <><Tile fill="#c8c8c8" /><path d="M30 .5H42Q55 .5 55 13V36Q34 28 30 .5Z" fill="#f2f2f2" /><path d="M14 .5V56" stroke="#f6f6f6" strokeWidth="7" fill="none" /><path d="M11 1V55M18 1V55" stroke="#808080" strokeWidth="1.200" /><path d="M36 0Q38 26 55 30" stroke="#9c9c9c" strokeWidth="5" fill="none" /><circle cx="14" cy="34" r="7.500" fill="#fff" stroke="#777" strokeWidth="2.500" /><path d="M33 38H52V50L42 56 33 50Z" fill="#555" /><text x="42.500" y="50" fontSize="9" textAnchor="middle" fill="#fff" fontFamily={font}>280</text></> },
  { art: <><Tile fill="#f6f6f6" />{spokes.map((a, i) => <ellipse key={a} cx="28" cy="16" rx="7.500" ry="11.500" fill={["#888", "#6c6c6c", "#aaa", "#777", "#999", "#5c5c5c", "#a4a4a4", "#8a8a8a"][i]} opacity="0.8" transform={`rotate(${a} 28 28)`} />)}</> },
  { art: <><Tile fill="url(#mid)" /><rect x="8" y="15" width="28" height="26" rx="6" fill="#f0f0f0" /><path d="M38 25 48 17V39L38 31Z" fill="#f0f0f0" /></> },
  { art: <><Tile fill="#f6f6f6" /><path d="M1 17V13Q1 .5 13.500 .5H42.500Q55 .5 55 13V17Z" fill="#5c5c5c" /><text x="28" y="14" fontSize="11.500" fontWeight="600" textAnchor="middle" fill="#fff" fontFamily={font}>MAR</text><text x="28" y="48" fontSize="31" textAnchor="middle" fill="#1c1c1c" fontFamily={font}>28</text></> },
  { art: <><Tile fill="#e8e8e8" /><path d="M20 3H34V26H42L27 46 12 26H20Z" fill="#8c8c8c" /><rect x="30" y="28" width="28" height="30" rx="3" fill="#b0b0b0" stroke="#666" strokeWidth="1" /><circle cx="44" cy="42" r="9" fill="#d8d8d8" stroke="#888" /></> },
  { art: <><Tile fill="#5c5c5c" /><path d="M51 3H57V16H51ZM51 19H57V32H51ZM51 35H57V48H51Z" fill="#727272" /><ellipse cx="28" cy="28" rx="17" ry="20" fill="none" stroke="#454545" strokeWidth="2.500" /><circle cx="28" cy="22" r="7" fill="#454545" /><path d="M16 42Q28 26 40 42Q28 52 16 42Z" fill="#454545" /></> },
  { art: <><Tile fill="#f6f6f6" />{[14, 28, 42].map((y, i) => <g key={y}><circle cx="11.500" cy={y} r="4" fill={i === 1 ? "#333" : "#888"} /><circle cx="11.500" cy={y} r="5" fill="none" stroke="#aaa" /><path d={`M20 ${y}H50`} stroke="#bbb" strokeWidth="1.500" /></g>)}</> },
  { art: <><Tile fill="url(#white)" /><path d="M1 15V13Q1 .5 13.500 .5H42.500Q55 .5 55 13V15Z" fill="#9a9a9a" /><path d="M1 17H55" stroke="#666" strokeDasharray="1.200 1.200" /><path d="M1 28H55M1 41H55" stroke="#d0d0d0" strokeWidth="1.500" /></> },
  { art: <><Tile fill="#1a1a1a" /><g transform="translate(7 20) scale(0.95)"><FaApple size={17} color="#fff" /></g><text x="36" y="34" fontSize="19" fontWeight="600" textAnchor="middle" fill="#fff" fontFamily={font}>tv</text><Badge n="1" /></> },
  { art: <text x="28" y="55" fontSize="74" fontWeight="300" textAnchor="middle" fill="#a4a4a4" fontFamily={font}>?</text> },
  { art: <><Tile fill="url(#dark)" /><g transform="translate(11 11)"><FaMusic size={34} color="#fff" /></g></> },
  { art: <><Tile fill="url(#mid)" /><g transform="translate(8 7)"><FaPodcast size={41} color="#fff" /></g></> },
  { dot: true, art: <><Tile fill="url(#mid)" /><path d="M26 11 43 44M31 11 15 39M8 36H33M39 36H49M13 42 11 46" stroke="#fff" strokeWidth="4.500" fill="none" strokeLinecap="round" /><Badge n="1" /></> },
  { art: <><Tile fill="#9c9c9c" /><circle cx="28" cy="28" r="21" fill="#3a3a3a" stroke="#222" strokeWidth="5" strokeDasharray="2 1.500" /><circle cx="28" cy="28" r="14.500" fill="none" stroke="#b4b4b4" strokeWidth="3" /><path d="M28 28 16 12M28 28H48M28 28 16 44" stroke="#b4b4b4" strokeWidth="3" /><circle cx="28" cy="28" r="4" fill="#555" /><Badge n="2" /></> },
  { dot: true, art: <><Tile fill="#f4f4f4" /><circle cx="28" cy="28" r="24" fill="#8c8c8c" /><path d="M28 28 7 16A24 24 0 0 1 49 16Z" fill="#6a6a6a" /><path d="M28 28 49 16A24 24 0 0 1 28 52Z" fill="#b4b4b4" /><circle cx="28" cy="28" r="11" fill="#f4f4f4" /><circle cx="28" cy="28" r="8" fill="#8a8a8a" /></> },
  { dot: true, art: <><rect x="14" y="2" width="42" height="36" fill="#999" /><path d="M35 2H56V20H35Z" fill="#c0c0c0" /><path d="M14 28 58 28V54H14Z" fill="#c4c4c4" /><path d="M14 54 36 40 58 54Z" fill="#dcdcdc" /><rect x="-1" y="13" width="30" height="30" rx="3" fill="#4c4c4c" /><text x="14" y="36" fontSize="22" fontWeight="700" textAnchor="middle" fill="#fff" fontFamily={font}>O</text><Badge n="2" /></> },
  { art: <><ellipse cx="28" cy="28" rx="30" ry="31" fill="#1e1e1e" /><ellipse cx="28" cy="28" rx="24" ry="27" fill="#2c2c2c" /><ellipse cx="32" cy="28" rx="16" ry="23" fill="#181818" /><ellipse cx="33" cy="28" rx="12" ry="21" fill="#363636" /></> },
  "sep",
  { dot: true, art: <OfficeIcon letter="X" tone="#4c4c4c" /> },
  { dot: true, art: <><Tile fill="#dcdcdc" /><rect x="4" y="3" width="48" height="50" rx="10" fill="#bcbcbc" /><path d="M4 32 18 36 30 33 52 34V44Q52 53 42 53H14Q4 53 4 44Z" fill="#5c5c5c" /><path d="M4 42 18 38 30 50 20 53Q4 53 4 44Z" fill="#f0f0f0" /><rect x="29" y="28" width="24" height="12" rx="3" fill="#111" /><path d="M31 39H51L56 54Q56 58 52 58H31Q27 58 27 54Z" fill="#aaa" stroke="#eee" strokeWidth="1.500" /></> },
  { dot: true, art: <><Tile fill="#f6f6f6" /><path d="M2 16H54M2 24H54M2 32H54M2 40H54" stroke="#a8a8a8" strokeWidth="1.200" /><path d="M49-4 26 44 23 57" stroke="#6c6c6c" strokeWidth="4" fill="none" /><path d="M50-4 27 44" stroke="#e0e0e0" strokeWidth="1.500" /></> },
  { dot: true, art: <><Tile fill="#f2f2f2" /><ellipse cx="28" cy="28" rx="23" ry="24" fill="#8c8c8c" /><path d="M12 29 43 16 38 42 28 34 24 38 23 32Z" fill="#fff" /></> },
  { dot: true, art: <><rect x="-1" y="-1" width="58" height="58" rx="4" fill="#404040" /><path d="M12 16 46 6V20L30 25 46 31V42L12 52V39L28 34 12 28Z" fill="#767676" /></> },
  { dot: true, art: <><path d="M28-3A30 30 0 1 1 15 54L-1 58 4 43A30 30 0 0 1 28-3Z" fill="#f4f4f4" /><circle cx="29" cy="27" r="24.500" fill="#8c8c8c" /><path d="M17 15Q21 11 24 16L26 21Q26 24 23 25 27 33 35 37 37 33 40 34L45 37Q47 42 41 44 32 46 22 35 11 22 17 15Z" fill="#f4f4f4" /></> },
  { dot: true, art: <><rect x="0" y="3" width="56" height="50" rx="3" fill="#989898" /><path d="M13 34V13L34 8 40 34H47L50 44M13 36H40V44H13ZM19 16 31 13 34 28H19Z" stroke="#333" strokeWidth="3.500" fill="none" /><circle cx="14" cy="46" r="4.500" fill="#333" /><circle cx="38" cy="46" r="4.500" fill="#333" /></> },
  { dot: true, art: <><Tile fill="#b8b8b8" /><rect x="4" y="3.500" width="48" height="49" rx="10" fill="#0c0c0c" /><path d="M10 12 15 17 10 22M18 22H26" stroke="#f4f4f4" strokeWidth="2" fill="none" /></> },
  { dot: true, art: <><Tile fill="#1c1c1c" /><path d="M10 2V54M19 0V56M28 0V56M37 0V56M46 2V54" stroke="#3a3a3a" strokeWidth="1" /><path d="M2 32H8L12 37 17 27 22 35 27 24 31 30 37 14 42 40 46 28 49 32 54 18" stroke="#f0f0f0" strokeWidth="1.800" fill="none" /><path d="M37 2V56" stroke="#999" /></> },
  { dot: true, art: <><path d="M3 37H53L56 59H0Z" fill="#6e6e6e" /><path d="M24-2H32L46 46Q28 56 10 46Z" fill="#8a8a8a" /><path d="M21.500 7H34.500L37.500 19H18.500ZM15.500 30H40.500L44 42Q28 50 12 42Z" fill="#f6f6f6" /></> },
  { dot: true, art: <OfficeIcon letter="W" tone="#707070" /> },
  { dot: true, art: <><g stroke="#f6f6f6" fill="none" strokeWidth="3" strokeLinejoin="round"><path d="M28 0V60M16-4 20 6 28 28 36 6 40-4M-4 20 4 22 28 28 52 22 60 20M0 52 6 44 28 28 50 44 56 52" /><path d="M20 6H36L52 22 50 44 28 54 6 44 4 22Z" /><path d="M23 15H33L43 25 41 38 28 44 15 38 13 25Z" /></g><path d="M8 38 14 22H24L32 32 38 20H50L44 38H34L26 28 20 40Z" fill="#2c2c2c" /></> },
  { dot: true, art: <><Tile fill="#4c4c4c" /><path d="M4 52V60L9 57 14 60V54Z" fill="#3a3a3a" /><text x="28" y="37" fontSize="28" textAnchor="middle" fill="#f4f4f4" fontFamily="Liberation Serif, serif">Aa</text></> },
  { dot: true, art: <><path d="M6-2H34L50 14V58H6Z" fill="#f4f4f4" /><path d="M34-2V14H50Z" fill="#c4c4c4" /><path d="M-5 60 1 52-3 51 4 49V57L1 55-3 61Z" fill="#111" stroke="#ddd" strokeWidth="0.800" /></> },
  "sep",
  { art: <><path d="M7-3H35L49 12V58H7Z" fill="#f0f0f0" /><path d="M35-3V16H49Z" fill="#b4b4b4" /><path d="M11 5H18M11 11H28M11 15H33M11 22H24M11 28H20M14 34H26M11 40H22M14 46H26" stroke="#a4a4a4" strokeWidth="2" /><text x="28" y="54" fontSize="11.500" fontWeight="600" textAnchor="middle" fill="#555" fontFamily={font}>PDF</text></> },
  { art: <><path d="M4 4H52L46 52Q44 58 28 58 12 58 10 52Z" fill="url(#mid)" opacity="0.85" /><path d="M5 4 12-3 20 2 27-4 36 1 44-2 51 4 46 10 34 7 24 11 12 8Z" fill="#f0f0f0" /><path d="M16 14 18 52M40 14 37 52" stroke="#c8c8c8" strokeWidth="2" opacity="0.5" /></> },
];

function DockBar() {
  return (
    <div className="relative ml-[34px] mt-[6.700px] flex h-[55px] w-[1687.500px] shrink-0 rounded-[11px] border border-[#5a5a5a] bg-gradient-to-r from-[#2a2a2a] via-[#3a3a3a] to-[#272727] pl-[2.200px]">
      {dock.map((d, i) =>
        d === "sep" ? (
          <div key={i} className="flex w-[19.300px] justify-center pt-[7px]"><span className="h-[40px] w-px bg-[#6a6a6a]" /></div>
        ) : (
          <div key={i} className="flex w-[43.260px] shrink-0 flex-col items-center pt-[7.500px]">
            <svg viewBox="0 0 56 56" className="h-[34.200px] w-[34.200px] overflow-visible">{d.art}</svg>
            {d.dot && <span className="mt-[5px] h-[4.800px] w-[4.800px] rounded-full bg-[#a8a8a8]" />}
          </div>
        ),
      )}
    </div>
  );
}

function Wallpaper() {
  const swirls = Array.from({ length: 46 }, (_, i) => {
    const x = (i * 137) % 1760, y = 18 + ((i * 29) % 40), w = 60 + ((i * 53) % 120);
    return `M${x} ${y}Q${x + w / 4} ${y - 12} ${x + w / 2} ${y}T${x + w} ${y + 4}Q${x + w + 20} ${y + 16} ${x + w / 2} ${y + 12}`;
  });
  const crests = Array.from({ length: 26 }, (_, i) => {
    const x = 60 + i * 66, w = 40 + ((i * 37) % 60);
    return `M${x} 76Q${x + w / 4} 68 ${x + w / 2} 73T${x + w} 71Q${x + w + 12} 74 ${x + w - 10} 76`;
  });
  return (
    <svg viewBox="0 0 1755 77" className="absolute bottom-0 left-0 h-[77px] w-[1755.400px]" preserveAspectRatio="none">
      <rect width="1755" height="77" fill="#101010" />
      {swirls.map((d, i) => <path key={i} d={d} fill="none" stroke={["#4a4a4a", "#2e2e2e", "#6a6a6a"][i % 3]} strokeWidth={1 + (i % 4)} opacity="0.7" />)}
      {crests.map((d, i) => <path key={i} d={d} fill="none" stroke={["#b0b0b0", "#5c5c5c", "#888"][i % 3]} strokeWidth={1.2 + (i % 2)} opacity="0.85" />)}
    </svg>
  );
}

function LeftScreen() {
  return (
    <div className="relative flex h-[1097px] w-[1755.400px] shrink-0 flex-col overflow-hidden bg-[#181818]">
      <Wallpaper />
      <MenuBar
        app="ForkLift"
        items={["File", "Edit", "View", "Go", "Favorites", "Commands", "Window", "Help"]}
        hollow="#cacaca"
        className="relative flex h-[29.300px] shrink-0 items-center justify-between bg-gradient-to-r from-[#c2c2c2] via-[#d9d9d9] to-[#bdbdbd] pl-[26.500px] pr-[22.700px] text-[#8e8e8e]"
      />
      <div className="relative h-[1.200px] shrink-0 bg-[#111]" />
      <div className="relative flex h-[999px] shrink-0 flex-col overflow-hidden rounded-[12px] border-y border-[#5c5c5c] bg-[#2b2b2b] shadow-[0_1.500px_0_#444]">
        <ForkToolbar />
        <div className="flex min-h-0 grow">
          <Sidebar />
          <LeftPane />
          <RightPane />
          <InfoPanel />
        </div>
      </div>
      <DockBar />
    </div>
  );
}

/* ---------- Chrome window ---------- */
const favs: Record<string, ReactNode> = {
  cherry: <><rect width="20" height="20" fill="#f4f4f4" /><path d="M16 2Q8 6 6 13M16 2 15 14" stroke="#666" strokeWidth="1.500" fill="none" /><circle cx="6" cy="15" r="4" fill="#8c8c8c" /><circle cx="14" cy="15.500" r="3" fill="#b0b0b0" /></>,
  cornix: <path d="M8 4 14 .5 12 10 9 18 4 19.500 3 13Z" fill="#050505" />,
  binance: <path d="M10 0 15 5 12.700 7.200 10 4.500 7.300 7.200 5 5ZM2.300 7.700 4.600 10 2.300 12.300 0 10ZM17.700 7.700 20 10 17.700 12.300 15.400 10ZM10 7.700 12.300 10 10 12.300 7.700 10ZM5 15 7.300 12.800 10 15.500 12.700 12.800 15 15 10 20Z" fill="#a8a8a8" />,
  spin: <><circle cx="10" cy="9" r="5.500" fill="#3c3c3c" /><path d="M1.500 7A9 9 0 1 0 18.500 7" fill="none" stroke="#e4e4e4" strokeWidth="2" /></>,
  m: <><rect y="2" width="20" height="17" rx="1.500" fill="#6e6e6e" /><text x="10" y="16" fontSize="17" fontWeight="700" textAnchor="middle" fill="#e4e4e4" fontFamily="Liberation Serif, serif">M</text></>,
  drop: <><path d="M11 1Q20 14 13 18 6 20 3 16 9 11 11 1Z" fill="#e8e8e8" /><path d="M10 8Q13 14 8 16Z" fill="#888" /></>,
  w3: <><text x="8" y="16.500" fontSize="16" fontWeight="800" textAnchor="middle" fill="#7c7c7c" fontFamily={font}>w</text><text x="18" y="8" fontSize="9" textAnchor="middle" fill="#7c7c7c" fontFamily={font}>3</text></>,
};

function Tab({ fav, title, active, nosep }: { fav: string; title: string; active?: boolean; nosep?: boolean }) {
  return (
    <div className={active
      ? "flex h-[41.500px] w-[193.700px] items-center rounded-t-[9px] bg-[#303030] pl-[13px] text-[#ececec]"
      : "flex h-[41.500px] w-[193.050px] items-center pl-[12.500px] text-[#a4a4a4]"}>
      <svg viewBox="0 0 20 20" className="h-[20px] w-[20px] shrink-0">{favs[fav]}</svg>
      <span className={active
        ? "ml-[10.400px] w-[116px] shrink-0 overflow-hidden whitespace-nowrap text-[14.300px]"
        : "ml-[10.400px] w-[116px] shrink-0 overflow-hidden whitespace-nowrap text-[14.300px] [mask-image:linear-gradient(to_right,#000_100px,transparent_114px)]"}>{title}</span>
      <span className={active ? "ml-[4.500px] flex size-[20.500px] items-center justify-center rounded-full bg-[#4c4c4c]" : "ml-[4.500px] flex size-[20.500px] items-center justify-center"}><Cross className="size-[10.500px]" /></span>
      {!active && !nosep && <span className="ml-auto h-[25.200px] w-px bg-[#484848]" />}
    </div>
  );
}

const exts: ReactNode[] = [
  <div className="relative"><svg viewBox="0 0 20 20" className="size-[19.500px]"><path d="M3 18 14 6" stroke="#ececec" strokeWidth="3" /><path d="M14 6 18 1" stroke="#777" strokeWidth="2" /></svg><span className="absolute -bottom-[6px] -right-[8px] h-[14px] w-[14px] rounded-[3px] bg-[#151515] text-center text-[9px] leading-[14px] text-white">.</span></div>,
  <FaEthereum size={19} color="#484848" />,
  <FaRecycle size={17} color="#4c4c4c" />,
  <svg viewBox="0 0 20 20" className="size-[19px]"><path d="M6 2H19V12H6Z" fill="#909090" /><path d="M3.500 5H17V16H3.500Z" fill="#bcbcbc" stroke="#303030" /><path d="M1 8.500H15V19H1Z" fill="#e8e8e8" stroke="#303030" /><path d="M4 17Q8 8 12 17" fill="none" stroke="#555" strokeWidth="2.500" /></svg>,
  <svg viewBox="0 0 20 20" className="size-[19.500px]"><rect x="1" y="1" width="18" height="14" rx="1" fill="#777" /><path d="M1 13H19" stroke="#999" strokeWidth="2" /><path d="M3 18H17" stroke="#4c4c4c" strokeWidth="2" strokeDasharray="2 1" /></svg>,
  <svg viewBox="0 0 20 20" className="size-[20px]"><rect width="20" height="20" rx="2.500" fill="#161616" /><path d="M7 17 10 7 13 17M7.500 14H12.500" stroke="#b0b0b0" strokeWidth="1.600" fill="none" /><path d="M6.500 3 10 5.500 13.500 3" stroke="#777" fill="none" /></svg>,
  <svg viewBox="0 0 20 20" className="size-[20px]"><circle cx="10" cy="10" r="10" fill="#9c9c9c" /><text x="10" y="15" fontSize="14" fontWeight="600" textAnchor="middle" fill="#f4f4f4" fontFamily={font}>G</text></svg>,
  <svg viewBox="0 0 20 20" className="size-[20px]"><circle cx="10" cy="10" r="7.500" fill="none" stroke="#a0a0a0" strokeWidth="5" /></svg>,
  <div className="relative"><svg viewBox="0 0 20 20" className="size-[20px]"><rect width="20" height="20" rx="2" fill="#b0b0b0" /><path d="M7 5V14M13 5V14" stroke="#f4f4f4" strokeWidth="3" /></svg><span className="absolute -bottom-[7px] -left-[6px] w-[32px] rounded-[3px] bg-[#727272] text-center text-[11px] font-semibold leading-[14.500px] text-white">NEW</span></div>,
  <MdExtension size={22} color="#ececec" />,
  <svg viewBox="0 0 26 26" className="size-[26px]"><circle cx="13" cy="13" r="13" fill="#111" /><path d="M6 12Q13 2 20 12L18 20Q13 26 9 20Z" fill="#777" /><path d="M8 10Q13 14 18 9M11 17H16M4 8 8 4M20 5 23 10" stroke="#d8d8d8" strokeWidth="1.800" fill="none" /><path d="M12 20 15 19 14 25Z" fill="#ccc" /></svg>,
  <svg viewBox="0 0 4 18" className="h-[17px] w-[4px]" fill="#ececec"><circle cx="2" cy="2" r="2" /><circle cx="2" cy="9" r="2" /><circle cx="2" cy="16" r="2" /></svg>,
];

const marks: [ReactNode, string][] = [
  [<path d="M2 1V19M10 1V19M18 1V19" stroke="#8c8c8c" strokeWidth="3.600" strokeDasharray="3.600 3.600" />, "Apps"],
  [<><circle cx="10" cy="10" r="8.500" fill="#0c0c0c" stroke="#5c5c5c" strokeWidth="1.500" strokeDasharray="2 1" /><path d="M8 5H13M10.500 5V14" stroke="#777" strokeWidth="1.500" /></>, "GT_WP_ADMIN"],
  [<><circle cx="10" cy="10" r="10" fill="#949494" /><text x="10" y="15" fontSize="14" textAnchor="middle" fill="#e4e4e4" fontFamily={font}>C</text></>, "Canva"],
  [<><circle cx="10" cy="10" r="10" fill="#f4f4f4" /><path d="M4 17V7L7 3 9 6H11L13 3 16 7V17H13V8L10 10 7 8V17Z" fill="#777" /></>, "Revenue.ie"],
  [<><path d="M3 4 13 1 17 4 18.500 19 12 20 1 18Z" fill="#8c8c8c" /><text x="8.500" y="15.500" fontSize="13" fontWeight="800" textAnchor="middle" fill="#f4f4f4" fontFamily={font}>S</text></>, "Shopify"],
  [<><path d="M6 6V3H14V6" stroke="#888" strokeWidth="2" fill="none" /><rect x="1" y="5" width="18" height="14" rx="2" fill="#c4c4c4" /><path d="M4 10H16V19H4Z" fill="#f0f0f0" /><path d="M8 12V16L10 18V20H12V16L14 15V12L12 14 10 14Z" fill="#555" /></>, "SearchConsole"],
  [<><rect width="20" height="20" rx="3" fill="#f4f4f4" /><g fill="none" stroke="#777" strokeWidth="1.500"><circle cx="10" cy="6.500" r="3.500" /><circle cx="6" cy="13" r="3.500" /><circle cx="14" cy="13" r="3.500" /></g></>, "PLUSPROMOTION"],
  [<><rect width="20" height="20" rx="1" fill="#f4f4f4" /><path d="M6 4Q14 0 13.500 6 13 9 9 9 15 9 15 14 14 19 9 18 5 17 6 13" fill="none" stroke="#8c8c8c" strokeWidth="3" /></>, "3 Top Up"],
];

function ChromeWindow() {
  return (
    <div className="relative flex h-[1218px] flex-col overflow-hidden rounded-[12px] border-x border-t-[1.500px] border-[#5a5a5a] bg-white shadow-[0_1px_0_1px_#333,0_8px_24px_rgba(0,0,0,0.25)]">
      <div className="flex h-[50px] shrink-0 items-end bg-[#202020] pl-[25px]">
        <div className="flex h-[51px] items-center gap-[9.800px] pr-[26px]">
          <span className="size-[14.600px] rounded-full bg-[#656565]" />
          <span className="size-[14.600px] rounded-full bg-[#989898]" />
          <span className="size-[14.600px] rounded-full bg-[#8a8a8a]" />
        </div>
        <Tab fav="cherry" title="127.0.0.1" />
        <Tab fav="cornix" title="Cornix" />
        <Tab fav="binance" title="Binance Launchp" nosep />
        <Tab fav="spin" title="CoinRay · Apiary" active />
        <Tab fav="m" title="Crypto Signals: A" />
        <Tab fav="m" title="Cryptocurrency I" />
        <Tab fav="drop" title="Best Performing" />
        <Tab fav="w3" title="CSS Styling Tabl" />
        <Tab fav="w3" title="Tryit Editor v3.6" />
        <svg viewBox="0 0 15 15" className="mb-[13px] ml-[19px] size-[15px]" stroke="#b4b4b4" strokeWidth="1.900"><path d="M7.500 0V15M0 7.500H15" /></svg>
      </div>
      <div className="flex h-[43.500px] shrink-0 items-center bg-[#303030] pl-[17px] text-[#ececec]">
        <svg viewBox="0 0 18 18" className="size-[18px]" fill="none" stroke="currentColor" strokeWidth="2"><path d="M17.500 9H2M9.500 1 1.500 9 9.500 17" /></svg>
        <svg viewBox="0 0 18 18" className="ml-[21.500px] size-[18px] text-[#808080]" fill="none" stroke="currentColor" strokeWidth="2"><path d="M.5 9H16M8.500 1 16.500 9 8.500 17" /></svg>
        <Cross className="ml-[21.500px] size-[15.500px]" />
        <div className="ml-[19px] flex h-[34.300px] w-[1725.500px] shrink-0 items-center rounded-full bg-[#202020] pl-[16px] pr-[11px]">
          <svg viewBox="0 0 12 15" className="h-[14px] w-[11.500px]"><path d="M3 7V4.500A3 3 0 0 1 9 4.500V7" fill="none" stroke="currentColor" strokeWidth="1.500" /><rect x="0.500" y="6" width="11" height="9" rx="1.200" fill="currentColor" /></svg>
          <span className="ml-[14px] grow whitespace-nowrap text-[16.900px] text-[#8a8a8a]"><span className="text-[#f2f2f2]">coinray.docs.apiary.io</span>/#reference/0/market-collection/list-order-book?console=1</span>
          <MdStarOutline size={21} color="#c4c4c4" />
        </div>
        <div className="ml-[7px] flex">
          {exts.map((e, i) => <div key={i} className="flex w-[39px] items-center justify-center">{e}</div>)}
        </div>
      </div>
      <div className="flex h-[41px] shrink-0 items-center bg-[#303030] pb-[4px] pl-[16px]">
        {marks.map(([art, label]) => (
          <div key={label} className="mr-[20.700px] flex items-center">
            <svg viewBox="0 0 20 20" className="size-[19.500px]">{art}</svg>
            <span className="ml-[9.800px] whitespace-nowrap text-[14.450px] text-[#ececec]">{label}</span>
          </div>
        ))}
      </div>
      <div className="h-[97.500px] shrink-0 border-b-[1.400px] border-t-[1.200px] border-b-[#8a8a8a] border-t-[#202020] bg-[#4c4c4c]" />
    </div>
  );
}

function RightScreen() {
  return (
    <div className="relative grow overflow-hidden bg-black">
      <MenuBar
        app="Chrome"
        items={["File", "Edit", "View", "History", "Bookmarks", "People", "Tab", "Window", "Help"]}
        hollow="#5a5a5a"
        className="flex h-[29.300px] items-center justify-between bg-[#5a5a5a] pl-[25.500px] pr-[22.500px] pt-px text-[#f0f0f0] [text-shadow:0_1px_3px_rgba(0,0,0,0.4)]"
      />
      <div className="absolute left-0 top-[1180px] h-[95.400px] w-full overflow-hidden rounded-b-[12px] bg-gradient-to-b from-[#666] from-70% to-[#b2b2b2] shadow-[inset_10px_0_12px_-6px_#ccc,inset_-10px_0_12px_-6px_#ccc]">
        <span className="absolute left-[1089px] top-[57px] whitespace-nowrap text-[39px] font-bold leading-[46px] tracking-[1.300px] text-[#1c1c1c]">Bitcoin</span>
        <span className="absolute right-[51px] top-[40px] h-[38px] w-[178px] rounded-[19px] bg-[#333]" />
      </div>
      <div className="mt-[1px]"><ChromeWindow /></div>
    </div>
  );
}

export default function App() {
  return (
    <div className="flex h-[1317px] w-[4096px] overflow-hidden bg-black font-['Inter',sans-serif] leading-normal tabular-nums">
      <Defs />
      <LeftScreen />
      <RightScreen />
    </div>
  );
}
